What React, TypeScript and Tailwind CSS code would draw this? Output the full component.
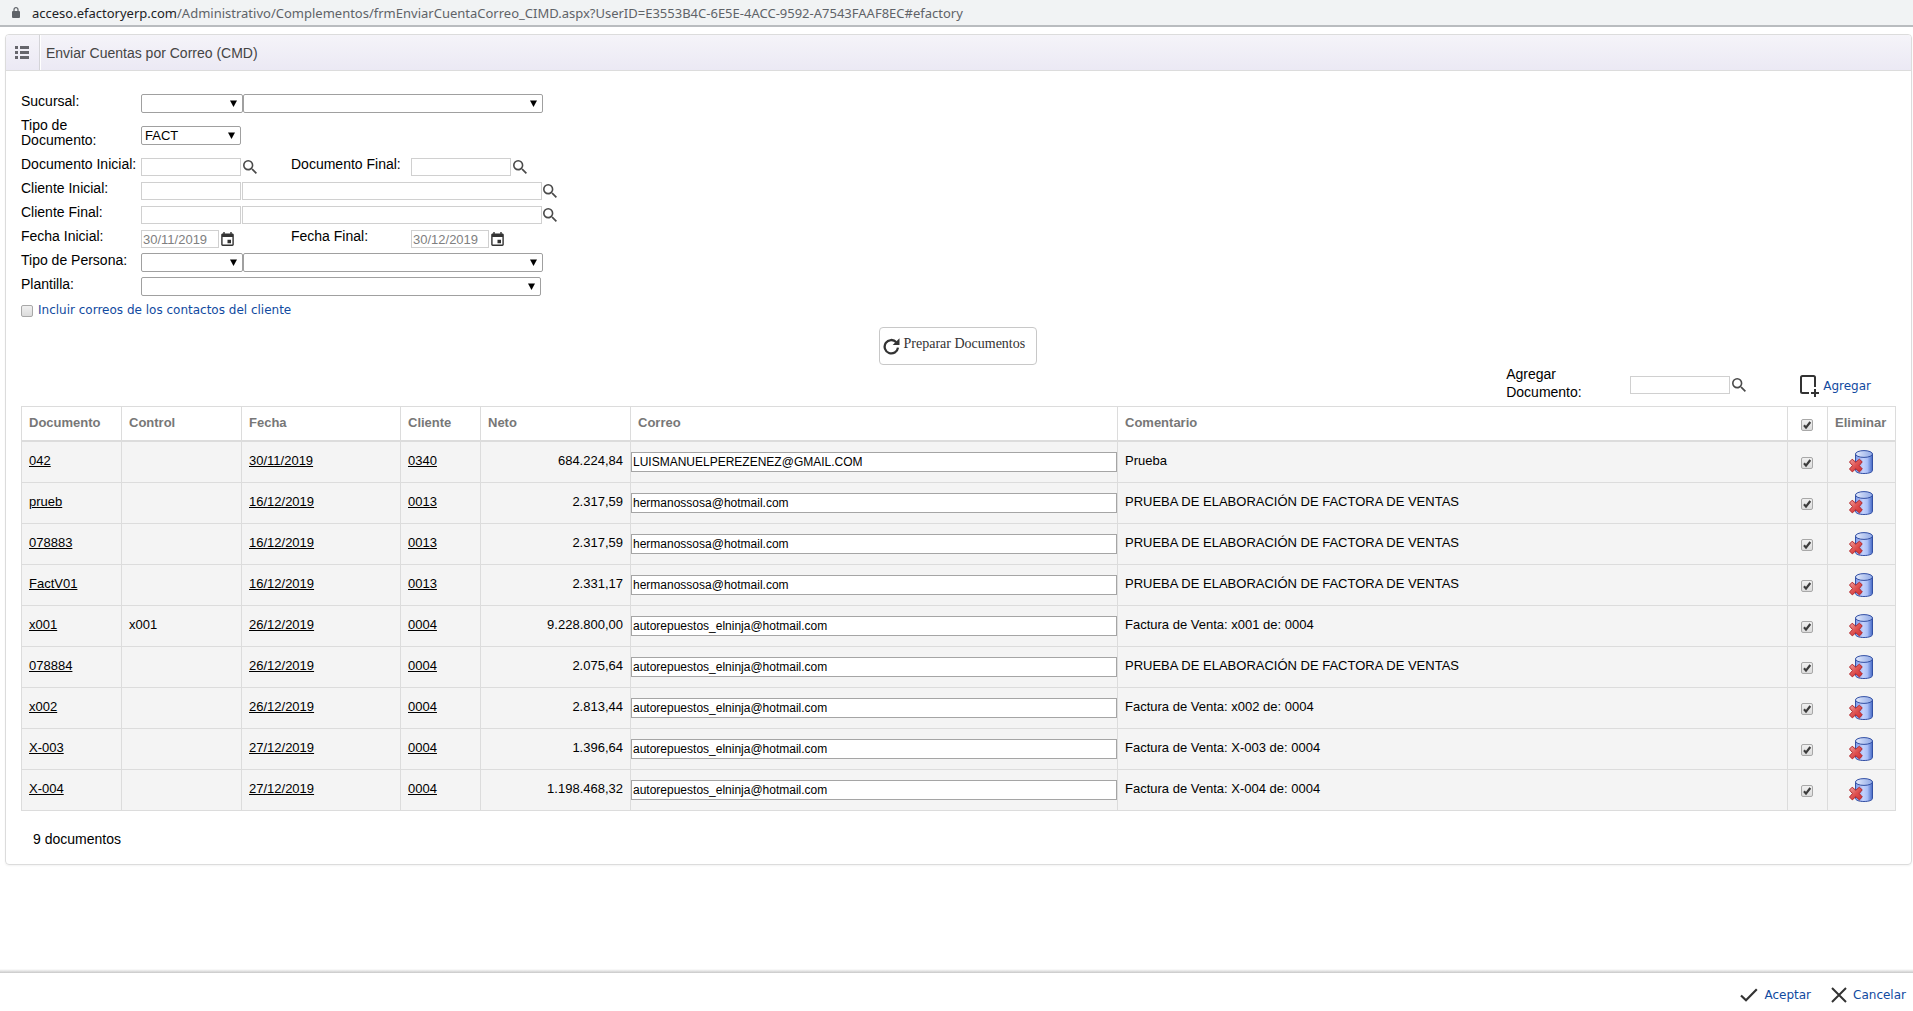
import React, { useState } from "react";

interface Documento {
  documento: string;
  control: string;
  fecha: string;
  cliente: string;
  neto: string;
  correo: string;
  comentario: string;
}

const VENTAS = "PRUEBA DE ELABORACIÓN DE FACTORA DE VENTAS";
const HERMANOS = "hermanossosa@hotmail.com";
const NINJA = "autorepuestos_elninja@hotmail.com";

const documentos: Documento[] = [
  { documento: "042", control: "", fecha: "30/11/2019", cliente: "0340", neto: "684.224,84", correo: "LUISMANUELPEREZENEZ@GMAIL.COM", comentario: "Prueba" },
  { documento: "prueb", control: "", fecha: "16/12/2019", cliente: "0013", neto: "2.317,59", correo: HERMANOS, comentario: VENTAS },
  { documento: "078883", control: "", fecha: "16/12/2019", cliente: "0013", neto: "2.317,59", correo: HERMANOS, comentario: VENTAS },
  { documento: "FactV01", control: "", fecha: "16/12/2019", cliente: "0013", neto: "2.331,17", correo: HERMANOS, comentario: VENTAS },
  { documento: "x001", control: "x001", fecha: "26/12/2019", cliente: "0004", neto: "9.228.800,00", correo: NINJA, comentario: "Factura de Venta: x001 de: 0004" },
  { documento: "078884", control: "", fecha: "26/12/2019", cliente: "0004", neto: "2.075,64", correo: NINJA, comentario: VENTAS },
  { documento: "x002", control: "", fecha: "26/12/2019", cliente: "0004", neto: "2.813,44", correo: NINJA, comentario: "Factura de Venta: x002 de: 0004" },
  { documento: "X-003", control: "", fecha: "27/12/2019", cliente: "0004", neto: "1.396,64", correo: NINJA, comentario: "Factura de Venta: X-003 de: 0004" },
  { documento: "X-004", control: "", fecha: "27/12/2019", cliente: "0004", neto: "1.198.468,32", correo: NINJA, comentario: "Factura de Venta: X-004 de: 0004" },
];

/* Icons */

const SearchIcon = () => (
  <svg width="14" height="14" viewBox="3 3 17.5 17.5" fill="#4a4a4a">
    <path d="M15.5 14h-.79l-.28-.27A6.47 6.47 0 0 0 16 9.5 6.5 6.5 0 1 0 9.5 16c1.61 0 3.09-.59 4.23-1.57l.27.28v.79l5 4.99L20.49 19l-4.99-5zm-6 0C7.01 14 5 11.99 5 9.5S7.01 5 9.5 5 14 7.01 14 9.5 11.99 14 9.5 14z" />
  </svg>
);

const CalendarIcon = () => (
  <svg width="13" height="14" viewBox="3 1 18 20" fill="#333333">
    <path d="M17 12h-5v5h5v-5zM16 1v2H8V1H6v2H5c-1.11 0-1.99.9-1.99 2L3 19c0 1.1.89 2 2 2h14c1.1 0 2-.9 2-2V5c0-1.1-.9-2-2-2h-1V1h-2zm3 18H5V8h14v11z" />
  </svg>
);

const ListIcon = () => (
  <svg width="14" height="13" viewBox="0 0 14 13" fill="#66666c">
    <path d="M0 0h3v3H0zM5 0h9v3H5zM0 5h3v3H0zM5 5h9v3H5zM0 10h3v3H0zM5 10h9v3H5z" />
  </svg>
);

const LockIcon = () => (
  <svg width="8" height="11" viewBox="0 0 8 11">
    <rect x="0" y="4" width="8" height="7" rx="1" fill="#5f6368" />
    <path d="M2 4.500V2.700a2 2 0 0 1 4 0V4.500" fill="none" stroke="#5f6368" strokeWidth="1.200" />
  </svg>
);

const RefreshIcon = () => (
  <svg width="17" height="17" viewBox="0 0 17 17">
    <path d="M13.300 4.200A6.700 6.700 0 1 0 15 9.600" fill="none" stroke="#333333" strokeWidth="2.300" />
    <path d="M16.500 0.300V7H9.700Z" fill="#333333" />
  </svg>
);

const AddPageIcon = () => (
  <svg width="19" height="22" viewBox="0 0 19 22" fill="none" stroke="#333333" strokeWidth="2">
    <path d="M9 18H2.500Q1 18 1 16.500V2.500Q1 1 2.500 1H13.500Q15 1 15 2.500V12" />
    <path d="M15 14V22M11 18H19" />
  </svg>
);

const CheckIcon = () => (
  <svg width="18" height="14" viewBox="0 0 18 14" fill="none" stroke="#333333" strokeWidth="2.200">
    <path d="M1 7.500L6 12.300L16.800 1.200" />
  </svg>
);

const CloseIcon = () => (
  <svg width="16" height="16" viewBox="0 0 16 16" fill="none" stroke="#333333" strokeWidth="2">
    <path d="M1 1L15 15M15 1L1 15" />
  </svg>
);

const DeleteIcon = () => (
  <svg width="24" height="24" viewBox="0 0 24 24">
    <defs>
      <linearGradient id="cilindro" x1="0" x2="1" y1="0" y2="0">
        <stop offset="0" stopColor="#7f9bea" />
        <stop offset="0.450" stopColor="#c3d1fb" />
        <stop offset="0.700" stopColor="#a9bef7" />
        <stop offset="1" stopColor="#4468c4" />
      </linearGradient>
      <linearGradient id="tapa" x1="0" x2="1" y1="0" y2="0">
        <stop offset="0" stopColor="#e3eafc" />
        <stop offset="1" stopColor="#8ea8e6" />
      </linearGradient>
      <linearGradient id="equis" x1="0" x2="1" y1="0" y2="1">
        <stop offset="0" stopColor="#f3a3a0" />
        <stop offset="0.500" stopColor="#dd5150" />
        <stop offset="1" stopColor="#d22f33" />
      </linearGradient>
    </defs>
    <path d="M6.500 4V20.300C6.500 22.300 10 23.500 15 23.500S23.500 22.300 23.500 20.300V4Z" fill="url(#cilindro)" stroke="#3350a4" />
    <ellipse cx="15" cy="4" rx="8.500" ry="3.400" fill="url(#tapa)" stroke="#3350a4" />
    <path
      d="M3.200 9.200L6.800 12.300L10.300 9.200L13.200 11.800L10.300 15.600L13.300 19L10.400 21.900L6.800 18.700L3.300 21.900L0.500 19L3.500 15.600L0.500 12Z"
      fill="url(#equis)"
      stroke="#b2282c"
      strokeLinejoin="round"
    />
  </svg>
);

/* Form controls */

interface SelectProps {
  id?: string;
  label?: string;
  value?: string;
  className: string;
}

const Select = ({ id, label, value = "", className }: SelectProps) => (
  <div className={`relative h-[19px] ${className}`}>
    <select
      id={id}
      aria-label={label}
      defaultValue={value}
      className="block w-full h-full appearance-none rounded-[2px] border border-[#a0a0a0] bg-white pl-[3px] text-[13px] leading-4 text-black"
    >
      <option value={value}>{value}</option>
    </select>
    <svg className="absolute right-1.5 top-1.5 pointer-events-none" width="7" height="7" viewBox="0 0 7 7">
      <path d="M0 0.500H7L3.500 7Z" fill="#000000" />
    </svg>
  </div>
);

interface TextBoxProps {
  id?: string;
  label?: string;
  value?: string;
  className: string;
}

const TextBox = ({ id, label, value = "", className }: TextBoxProps) => (
  <input
    id={id}
    aria-label={label}
    type="text"
    defaultValue={value}
    className={`h-[18px] border border-[#d0d0d0] bg-white px-px text-[13px] leading-4 text-[#808080] ${className}`}
  />
);

const IconButton = ({ label, children }: { label: string; children: React.ReactNode }) => (
  <button type="button" aria-label={label} className="flex shrink-0">
    {children}
  </button>
);

interface CheckBoxProps {
  id?: string;
  label?: string;
  checked: boolean;
  onChange: (checked: boolean) => void;
}

const CheckBox = ({ id, label, checked, onChange }: CheckBoxProps) => (
  <span className="relative block size-3 shrink-0">
    <input
      id={id}
      aria-label={label}
      type="checkbox"
      checked={checked}
      onChange={(e) => onChange(e.target.checked)}
      className="block size-3 appearance-none rounded-[2px] border border-[#a8a8a8] bg-linear-to-b from-[#f0f0f0] to-[#dcdcdc]"
    />
    {checked && (
      <svg className="absolute inset-0 pointer-events-none" width="12" height="12" viewBox="0 0 12 12">
        <path d="M3 6.300L5 8.600L9.300 3" fill="none" stroke="#3c3c3c" strokeWidth="2.200" />
      </svg>
    )}
  </span>
);

const Row = ({ children }: { children: React.ReactNode }) => (
  <div className="flex items-start h-6 pt-px">{children}</div>
);

const Label = ({ htmlFor, children }: { htmlFor: string; children: React.ReactNode }) => (
  <label htmlFor={htmlFor} className="w-[120px] shrink-0 text-[14px] leading-[15px]">
    {children}
  </label>
);

const Filtros = () => {
  const [incluir, setIncluir] = useState(false);

  return (
    <div>
      <Row>
        <Label htmlFor="sucursal">Sucursal:</Label>
        <Select id="sucursal" className="w-[102px]" />
        <Select label="Nombre de sucursal" className="w-[300px]" />
      </Row>
      <div className="flex items-start h-[39px] pt-px">
        <Label htmlFor="tipoDocumento">
          Tipo de
          <br />
          Documento:
        </Label>
        <Select id="tipoDocumento" value="FACT" className="w-[100px] mt-2" />
      </div>
      <Row>
        <Label htmlFor="docInicial">Documento Inicial:</Label>
        <div className="flex items-center gap-0.5 w-[150px] mt-px">
          <TextBox id="docInicial" className="w-[100px]" />
          <IconButton label="Buscar documento inicial"><SearchIcon /></IconButton>
        </div>
        <Label htmlFor="docFinal">Documento Final:</Label>
        <div className="flex items-center gap-0.5 mt-px">
          <TextBox id="docFinal" className="w-[100px]" />
          <IconButton label="Buscar documento final"><SearchIcon /></IconButton>
        </div>
      </Row>
      <Row>
        <Label htmlFor="cliInicial">Cliente Inicial:</Label>
        <div className="flex items-center gap-px mt-px">
          <TextBox id="cliInicial" className="w-[100px]" />
          <TextBox label="Nombre del cliente inicial" className="w-[300px]" />
          <IconButton label="Buscar cliente inicial"><SearchIcon /></IconButton>
        </div>
      </Row>
      <Row>
        <Label htmlFor="cliFinal">Cliente Final:</Label>
        <div className="flex items-center gap-px mt-px">
          <TextBox id="cliFinal" className="w-[100px]" />
          <TextBox label="Nombre del cliente final" className="w-[300px]" />
          <IconButton label="Buscar cliente final"><SearchIcon /></IconButton>
        </div>
      </Row>
      <Row>
        <Label htmlFor="fechaInicial">Fecha Inicial:</Label>
        <div className="flex items-center gap-0.5 w-[150px] mt-px">
          <TextBox id="fechaInicial" value="30/11/2019" className="w-[78px]" />
          <IconButton label="Elegir fecha inicial"><CalendarIcon /></IconButton>
        </div>
        <Label htmlFor="fechaFinal">Fecha Final:</Label>
        <div className="flex items-center gap-0.5 mt-px">
          <TextBox id="fechaFinal" value="30/12/2019" className="w-[78px]" />
          <IconButton label="Elegir fecha final"><CalendarIcon /></IconButton>
        </div>
      </Row>
      <Row>
        <Label htmlFor="tipoPersona">Tipo de Persona:</Label>
        <Select id="tipoPersona" className="w-[102px]" />
        <Select label="Nombre del tipo de persona" className="w-[300px]" />
      </Row>
      <Row>
        <Label htmlFor="plantilla">Plantilla:</Label>
        <Select id="plantilla" className="w-[400px]" />
      </Row>
      <div className="flex items-center gap-[5px] h-[21px]">
        <CheckBox id="incluir" checked={incluir} onChange={setIncluir} />
        <label htmlFor="incluir" className="pb-0.5 font-['DejaVu_Sans',sans-serif] text-[12px] leading-4 text-[#114a9f]">
          Incluir correos de los contactos del cliente
        </label>
      </div>
    </div>
  );
};

const th = "h-[35px] border-r border-b-2 border-[#dcdcdc] px-[7px] pb-0.5 text-left font-bold text-[#777777]";
const td = "h-[41px] border-r border-b border-[#dcdcdc] px-[7px] pb-0.5";
const tdIcon = "border-r border-b border-[#dcdcdc] pr-0.5";

const TablaDocumentos = () => {
  const [marcados, setMarcados] = useState<boolean[]>(documentos.map(() => true));

  const marcar = (index: number, valor: boolean) => {
    setMarcados(marcados.map((m, i) => (i === index ? valor : m)));
  };

  return (
    <table className="w-full table-fixed border-separate border-spacing-0 border-l border-t border-[#dcdcdc] text-[13px] leading-4">
      <colgroup>
        <col className="w-[100px]" />
        <col className="w-[120px]" />
        <col className="w-[159px]" />
        <col className="w-[80px]" />
        <col className="w-[150px]" />
        <col className="w-[487px]" />
        <col />
        <col className="w-[40px]" />
        <col className="w-[68px]" />
      </colgroup>
      <thead>
        <tr>
          <th className={th}>Documento</th>
          <th className={th}>Control</th>
          <th className={th}>Fecha</th>
          <th className={th}>Cliente</th>
          <th className={th}>Neto</th>
          <th className={th}>Correo</th>
          <th className={th}>Comentario</th>
          <th className="border-r border-b-2 border-[#dcdcdc] pt-0.5 pr-0.5">
            <div className="flex justify-center">
              <CheckBox
                label="Marcar todos"
                checked={marcados.every((m) => m)}
                onChange={(valor) => setMarcados(documentos.map(() => valor))}
              />
            </div>
          </th>
          <th className={th}>Eliminar</th>
        </tr>
      </thead>
      <tbody className="bg-[#f4f4f4]">
        {documentos.map((d, i) => (
          <tr key={d.documento}>
            <td className={td}><a href="#documento" className="underline">{d.documento}</a></td>
            <td className={td}>{d.control}</td>
            <td className={td}><a href="#fecha" className="underline">{d.fecha}</a></td>
            <td className={td}><a href="#cliente" className="underline">{d.cliente}</a></td>
            <td className={`${td} text-right`}>{d.neto}</td>
            <td className="border-r border-b border-[#dcdcdc]">
              <input
                type="text"
                aria-label={`Correo de ${d.documento}`}
                defaultValue={d.correo}
                className="block w-full h-5 border border-[#a5a5a5] bg-white px-px text-[12px] leading-4"
              />
            </td>
            <td className={td}>{d.comentario}</td>
            <td className={`${tdIcon} pt-0.5`}>
              <div className="flex justify-center">
                <CheckBox label={`Marcar ${d.documento}`} checked={marcados[i]} onChange={(valor) => marcar(i, valor)} />
              </div>
            </td>
            <td className={tdIcon}>
              <div className="flex justify-center">
                <IconButton label={`Eliminar ${d.documento}`}><DeleteIcon /></IconButton>
              </div>
            </td>
          </tr>
        ))}
      </tbody>
    </table>
  );
};

const App = () => {
  return (
    <div className="flex flex-col min-h-screen bg-white font-['Liberation_Sans',Arial,sans-serif] text-black">
      {/* Address bar */}
      <div className="flex items-center gap-3 h-[27px] pl-3 bg-[#f1f3f4] border-b-2 border-[#b9bcbf] font-['Noto_Sans',sans-serif] text-[13px] leading-5 whitespace-nowrap">
        <LockIcon />
        <span className="text-[#5f6368]">
          <span className="text-[#202124]">acceso.efactoryerp.com</span>
          /Administrativo/Complementos/frmEnviarCuentaCorreo_CIMD.aspx?UserID=E3553B4C-6E5E-4ACC-9592-A7543FAAF8EC#efactory
        </span>
      </div>

      <main className="grow pt-[7px] pl-[5px] pr-px pb-6">
        <section className="rounded-[4px] border border-[#dcdcdc] shadow-xs">
          <header className="flex h-9 rounded-t-[3px] border-b border-[#dcdcdc] bg-linear-to-b from-[#f5f4f9] to-[#ebe9f4]">
            <button type="button" aria-label="Menú" className="flex items-center justify-center w-[34px] border-r border-[#d4d4d8] pr-0.5">
              <ListIcon />
            </button>
            <h1 className="flex items-center pl-[5px] border-l border-white text-[14px] leading-4 text-[#444444]">
              Enviar Cuentas por Correo (CMD)
            </h1>
          </header>

          <div className="px-[15px] pt-[22px]">
            <Filtros />

            <div className="flex justify-center pt-1.5 pr-0.5">
              <button
                type="button"
                className="flex items-center gap-1 h-[38px] w-[158px] rounded-[4px] border border-[#c8c8c8] pl-[3px] font-['Liberation_Serif',serif] text-[14px] leading-4 text-[#333333]"
              >
                <RefreshIcon />
                <span className="pb-1">Preparar Documentos</span>
              </button>
            </div>

            <div className="flex items-center justify-end h-[41px] pr-[25px]">
              <label htmlFor="agregarDocumento" className="w-[124px] text-[14px] leading-[18px] pb-1.5">
                Agregar
                <br />
                Documento:
              </label>
              <div className="flex items-center gap-0.5 mr-[54px] pb-0.5">
                <TextBox id="agregarDocumento" className="w-[100px]" />
                <IconButton label="Buscar documento"><SearchIcon /></IconButton>
              </div>
              <button type="button" className="flex items-center gap-1 font-['DejaVu_Sans',sans-serif] text-[12px] leading-4 text-[#114a9f]">
                <AddPageIcon />
                Agregar
              </button>
            </div>

            <TablaDocumentos />

            <p className="pt-5 pb-[17px] pl-3 text-[14px] leading-4">{documentos.length} documentos</p>
          </div>
        </section>
      </main>

      {/* Actions */}
      <footer>
        <div className="h-1 bg-linear-to-b from-white to-[#c8c8c8]" />
        <div className="flex items-center justify-end gap-5 h-[38px] pt-1.5 pr-[7px] font-['DejaVu_Sans',sans-serif] text-[12px] leading-4 text-[#114a9f]">
          <button type="button" className="flex items-center gap-1.5">
            <CheckIcon />
            Aceptar
          </button>
          <button type="button" className="flex items-center gap-1.5">
            <CloseIcon />
            Cancelar
          </button>
        </div>
      </footer>
    </div>
  );
};

export default App;
